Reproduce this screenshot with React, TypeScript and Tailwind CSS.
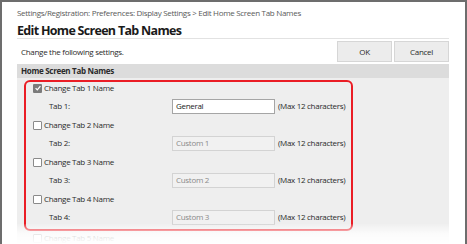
import React from "react";

const font = { fontFamily: '"Open Sans", "Noto Sans", sans-serif' };

function Box({ checked }: { checked?: boolean }) {
  if (checked) {
    return (
      <span className="flex h-[9px] w-[9px] shrink-0 items-center justify-center rounded-[1px] bg-[#7b7b7b]">
        <svg viewBox="0 0 10 10" className="h-[8px] w-[8px]">
          <path d="M2 5.2 L4.1 7.3 L8 2.6" fill="none" stroke="#fff" strokeWidth="1.6" />
        </svg>
      </span>
    );
  }
  return <span className="h-[9px] w-[9px] shrink-0 rounded-[1px] border border-[#8a8a8a] bg-white" />;
}

const tabs = [
  { n: 1, value: "General", on: true },
  { n: 2, value: "Custom 1", on: false },
  { n: 3, value: "Custom 2", on: false },
  { n: 4, value: "Custom 3", on: false },
];

export default function App() {
  return (
    <div
      style={font}
      className="relative h-[244px] w-[467px] overflow-hidden border-l-2 border-r-2 border-t-2 border-[#6d6d6d] bg-white text-[8px] tracking-[-0.3px] text-[#2a2a2a]"
    >
      <div className="ml-[15px] w-[432px]">
        {/* breadcrumb + title */}
        <div className="whitespace-nowrap pt-[5px] leading-[12px] text-[#5a5a5a]">
          Settings/Registration: Preferences: Display Settings &gt; Edit Home Screen Tab Names
        </div>
        <h1 className="mt-[5px] text-[12.5px] font-bold leading-[14px] tracking-[-0.7px] text-[#1a1a1a]">
          Edit Home Screen Tab Names
        </h1>
        <div className="h-px bg-[#e2e2e2]" />

        {/* description + buttons */}
        <div className="mt-[2px] flex h-[21px] items-center">
          <span className="ml-[4px]">Change the following settings.</span>
          <div className="ml-auto flex gap-[2px]">
            <button className="h-[21px] w-[55px] border border-[#d6d6d6] bg-[#ececec]">OK</button>
            <button className="h-[21px] w-[55px] border border-[#d6d6d6] bg-[#ececec]">Cancel</button>
          </div>
        </div>

        {/* section */}
        <div className="mt-[2px] flex h-[14px] items-center bg-[#dcdcdc] pl-[4px] font-bold">
          Home Screen Tab Names
        </div>
        <div className="bg-[#eeeeee] pb-[20px] pl-[7px] pt-[2px]">
          <div className="w-[329px] rounded-[6px] border-2 border-[#ea1d25] pb-[4px] pl-[7px]">
            {tabs.map((t, i) => (
              <div key={t.n} className={i === 0 ? "" : "mt-[5px]"}>
                <div className="flex h-[12px] items-center gap-[2px]">
                  <Box checked={t.on} />
                  <span>Change Tab {t.n} Name</span>
                </div>
                <div className="mt-[4px] flex h-[16px] items-center whitespace-nowrap">
                  <span className="ml-[16px] w-[123px]">Tab {t.n}:</span>
                  <div
                    className={
                      t.on
                        ? "flex h-[15px] w-[103px] items-center border border-[#a5a5a5] bg-white pl-[3px] text-[#222]"
                        : "flex h-[15px] w-[103px] items-center border border-[#d3d3d3] bg-[#f1f1f1] pl-[3px] text-[#8a8a8a]"
                    }
                  >
                    {t.value}
                  </div>
                  <span className="ml-[3px]">(Max 12 characters)</span>
                </div>
              </div>
            ))}
          </div>
          <div className="ml-[9px] mt-[1px] flex h-[12px] items-center gap-[2px]">
            <Box />
            <span>Change Tab 5 Name</span>
          </div>
        </div>
      </div>

      {/* bottom fade */}
      <div className="pointer-events-none absolute -left-[2px] -right-[2px] bottom-0 h-[20px] bg-gradient-to-b from-white/10 via-white/80 to-white" />
      <div className="pointer-events-none absolute -right-[2px] bottom-0 h-[50px] w-[3px] bg-gradient-to-b from-transparent to-white/80" />
      <div className="pointer-events-none absolute -left-[2px] bottom-0 h-[50px] w-[3px] bg-gradient-to-b from-transparent to-white/80" />
    </div>
  );
}
